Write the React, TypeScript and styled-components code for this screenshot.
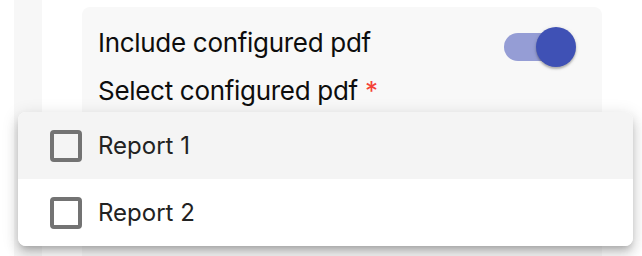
import styled, { createGlobalStyle } from 'styled-components';

const GlobalStyle = createGlobalStyle`
  html, body {
    margin: 0;
    padding: 0;
    background: #ffffff;
  }
  body {
    font-family: Inter, "Noto Sans", sans-serif;
  }
`;

type Option = {
  id: string;
  label: string;
};

const options: Option[] = [
  { id: 'r1', label: 'Report 1' },
  { id: 'r2', label: 'Report 2' },
];

const Page = styled.div`
  position: relative;
  display: flex;
  width: 642px;
  height: 256px;
  padding-left: 14px;
  box-sizing: border-box;
  overflow: hidden;
  background: #ffffff;
`;

const Rail = styled.div`
  width: 28px;
  flex: none;
  background: #f7f7f7;
`;

const Main = styled.div`
  flex: 1;
  padding: 7px 0 0 40px;
`;

const Card = styled.section`
  width: 520px;
  height: 300px;
  box-sizing: border-box;
  padding: 20px 30px 0 16px;
  border-radius: 8px;
  background: #f8f8f8;
`;

const ToggleRow = styled.div`
  display: flex;
  align-items: flex-start;
  justify-content: space-between;
  height: 40px;
`;

const Label = styled.div`
  font-size: 26px;
  line-height: 32px;
  color: #0d0d0d;
  letter-spacing: -0.3px;
`;

const FieldLabel = styled(Label)`
  margin-top: 8px;
`;

const Required = styled.span`
  color: #f44336;
`;

const Switch = styled.div<{ $on: boolean }>`
  position: relative;
  width: 68px;
  height: 28px;
  margin-top: 6px;
  border-radius: 14px;
  background: ${({ $on }) => ($on ? '#959dd5' : '#c4c4c4')};
`;

const Thumb = styled.span<{ $on: boolean }>`
  position: absolute;
  top: -6px;
  left: ${({ $on }) => ($on ? '32px' : '0')};
  width: 40px;
  height: 40px;
  border-radius: 50%;
  background: ${({ $on }) => ($on ? '#3f51b5' : '#fafafa')};
  box-shadow: 0 2px 2px rgba(0, 0, 0, 0.22), 0 1px 4px rgba(0, 0, 0, 0.14);
`;

const Menu = styled.ul`
  position: absolute;
  left: 18px;
  top: 112px;
  width: 615px;
  margin: 0;
  padding: 0;
  list-style: none;
  background: #ffffff;
  border-radius: 8px;
  overflow: hidden;
  box-shadow: 0 5px 6px -3px rgba(0, 0, 0, 0.2), 0 8px 12px 1px rgba(0, 0, 0, 0.12),
    0 3px 16px 2px rgba(0, 0, 0, 0.1);
`;

const Item = styled.li<{ $hover: boolean }>`
  display: flex;
  align-items: center;
  gap: 16px;
  height: 67px;
  padding-left: 32px;
  background: ${({ $hover }) => ($hover ? '#f4f4f4' : '#ffffff')};
  font-size: 24px;
  color: #222222;
`;

const Box = styled.span`
  width: 32px;
  height: 32px;
  box-sizing: border-box;
  border: 4px solid #737373;
  border-radius: 4px;
`;

export default function App(): JSX.Element {
  return (
    <>
      <GlobalStyle />
      <Page>
        <Rail />
        <Main>
          <Card>
            <ToggleRow>
              <Label>Include configured pdf</Label>
              <Switch $on>
                <Thumb $on />
              </Switch>
            </ToggleRow>
            <FieldLabel>
              Select configured pdf <Required>*</Required>
            </FieldLabel>
          </Card>
        </Main>
        <Menu role="listbox">
          {options.map((o, i) => (
            <Item key={o.id} $hover={i === 0}>
              <Box />
              {o.label}
            </Item>
          ))}
        </Menu>
      </Page>
    </>
  );
}
